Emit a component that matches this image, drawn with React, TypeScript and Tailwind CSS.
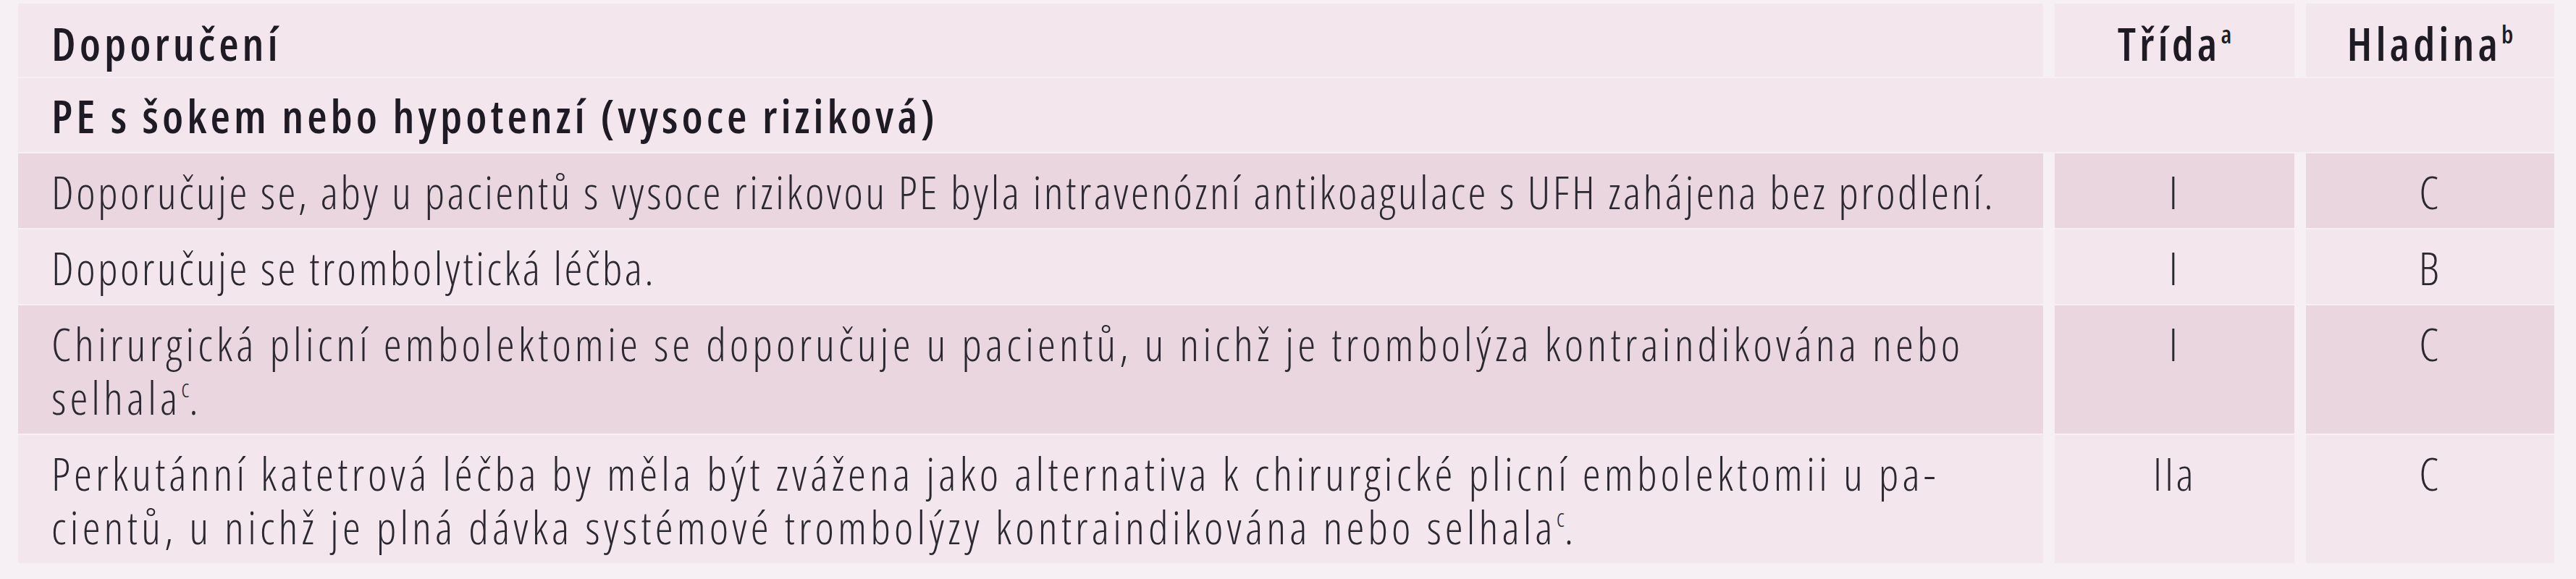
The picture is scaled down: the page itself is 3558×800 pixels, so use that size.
type Row = {
  text: React.ReactNode;
  cls: string;
  level: string;
  shaded: boolean;
  tracking: string;
};

const Sup = ({ children }: { children: React.ReactNode }) => (
  <sup className="relative -top-[24px] align-baseline text-[34px] tracking-normal">{children}</sup>
);

const ROWS: Row[] = [
  {
    text: 'Doporučuje se, aby u pacientů s vysoce rizikovou PE byla intravenózní antikoagulace s UFH zahájena bez prodlení.',
    cls: 'I',
    level: 'C',
    shaded: true,
    tracking: 'tracking-[3.4px]',
  },
  {
    text: 'Doporučuje se trombolytická léčba.',
    cls: 'I',
    level: 'B',
    shaded: false,
    tracking: 'tracking-[3.4px]',
  },
  {
    text: (
      <>
        Chirurgická plicní embolektomie se doporučuje u pacientů, u nichž je trombolýza kontraindikována nebo
        <br />
        selhala<Sup>c</Sup>.
      </>
    ),
    cls: 'I',
    level: 'C',
    shaded: true,
    tracking: 'tracking-[5.1px]',
  },
  {
    text: (
      <>
        Perkutánní katetrová léčba by měla být zvážena jako alternativa k chirurgické plicní embolektomii u pa-
        <br />
        cientů, u nichž je plná dávka systémové trombolýzy kontraindikována nebo selhala<Sup>c</Sup>.
      </>
    ),
    cls: 'IIa',
    level: 'C',
    shaded: false,
    tracking: 'tracking-[5.1px]',
  },
];

export default function App() {
  return (
    <div className="min-h-screen bg-[#f6eff3] pl-[25px] pt-[5px] font-['Open_Sans',sans-serif] text-[63px] leading-[74px] [font-stretch:75%]">
      <div className="grid grid-cols-[2797px_331px_343px] gap-x-[16px] gap-y-[2px]">
        {/* header */}
        <div className="bg-[#f3e7ed] pb-[9px] pl-[46px] pt-[18px] font-semibold tracking-[5px] text-[#1e1b24]">Doporučení</div>
        <div className="bg-[#f3e7ed] pb-[9px] pt-[18px] text-center font-semibold tracking-[5px] text-[#1e1b24]">
          Třída<Sup>a</Sup>
        </div>
        <div className="bg-[#f3e7ed] pb-[9px] pt-[18px] text-center font-semibold tracking-[5px] text-[#1e1b24]">
          Hladina<Sup>b</Sup>
        </div>

        {/* section */}
        <div className="col-span-3 bg-[#f3e7ed] pb-[13px] pl-[46px] pt-[15px] font-semibold tracking-[5px] text-[#1e1b24]">
          PE s šokem nebo hypotenzí (vysoce riziková)
        </div>

        {ROWS.map((row, i) => {
          const bg = row.shaded ? 'bg-[#e9d6de]' : 'bg-[#f3e7ed]';
          return (
            <div key={i} className="contents font-light tracking-[3.4px] text-[#2c2832]">
              <div className={`${bg} ${row.tracking} whitespace-nowrap pb-[13px] pl-[46px] pt-[16px]`}>{row.text}</div>
              <div className={`${bg} pb-[13px] pt-[16px] text-center`}>{row.cls}</div>
              <div className={`${bg} pb-[13px] pt-[16px] text-center`}>{row.level}</div>
            </div>
          );
        })}
      </div>
    </div>
  );
}
